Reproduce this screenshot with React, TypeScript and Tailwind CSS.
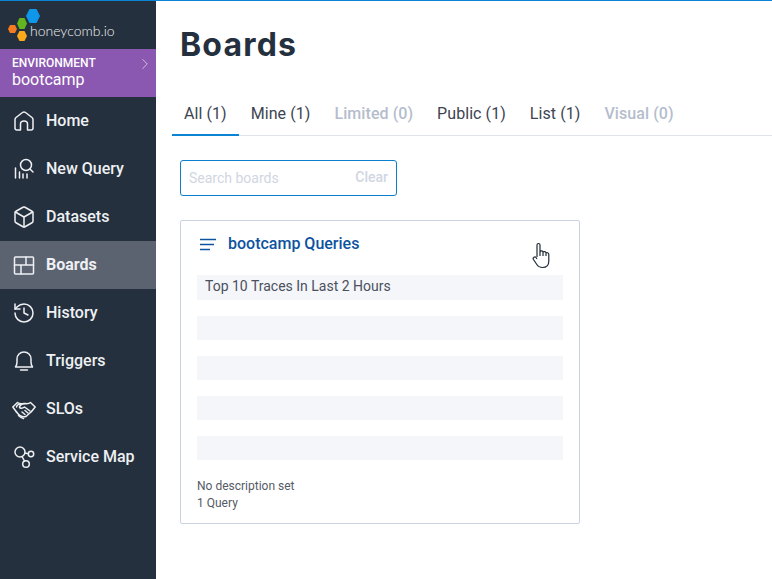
import { Box, History, ChevronRight } from "lucide-react";
import type { ReactNode } from "react";

const iconProps = { size: 24, strokeWidth: 1.5 };

function Icon({ children }: { children: ReactNode }) {
  return (
    <svg width="24" height="24" viewBox="0 0 24 24" fill="none" stroke="currentColor" strokeWidth="1.5" strokeLinecap="round" strokeLinejoin="round">
      {children}
    </svg>
  );
}

const HomeIcon = () => (
  <Icon>
    <path d="M3 19 V10.5 C3 9.5 3.5 9 4 8.5 L10.5 3.5 C11.5 2.8 12.5 2.8 13.5 3.5 L20 8.5 C20.5 9 21 9.5 21 10.5 V19 C21 20.2 20.2 21 19 21 H15.5 V15 C15.5 13 14 12 12 12 C10 12 8.5 13 8.5 15 V21 H5 C3.8 21 3 20.2 3 19 Z" />
  </Icon>
);

const QueryIcon = () => (
  <Icon>
    <circle cx="14" cy="8" r="5.5" />
    <path d="M18 12 L21 15" />
    <path d="M3.5 21 V11 M7.5 21 V15 M11 21 V17 M15 21 V17" />
  </Icon>
);

const BoardsIcon = () => (
  <Icon>
    <rect x="2.5" y="4" width="19" height="17" rx="1" />
    <path d="M2.5 12 H21.5 M14 4 V12 M9 12 V21" />
  </Icon>
);

const BellIcon = () => (
  <Icon>
    <path d="M3.5 18 C4 17 5 16 5 13 V10 C5 6 8 3 12 3 C16 3 19 6 19 10 V13 C19 16 20 17 20.5 18 Z" />
    <path d="M8.5 21 H15.5" />
  </Icon>
);

const HandshakeIcon = () => (
  <Icon>
    <path d="M4.5 15 L0.8 10 L5.5 5.5 C8 7.5 10 6.5 12 6.5 C14 6.5 16 7.5 18.5 5.5 L23.2 10 L19.5 14.5" />
    <path d="M14 6.5 C11 6.5 8 8 7.5 10 C8 12 10.5 11.5 12.5 10 L18 14" />
    <path d="M4.5 10 C5 8 7 7 9 7" />
    <path d="M4.5 15 C7.5 19 11 20.5 14 19.5 L19.5 14.5" />
    <path d="M6.5 18.5 C8 20 9.5 21 11.5 21.5" />
    <path d="M10 15 L13 17.5 M13 13.5 L16 16" />
  </Icon>
);

const MapIcon = () => (
  <Icon>
    <circle cx="8" cy="7" r="5" />
    <circle cx="19" cy="9" r="2.7" />
    <circle cx="14" cy="19" r="3.3" />
    <path d="M13 8 L16.3 8.7 M10 11.5 L12.5 16" />
  </Icon>
);

function Logo() {
  return (
    <svg width="32" height="32" viewBox="0 0 32 32" className="shrink-0">
      <polygon points="21.5,0 28.5,0 32,7 28.5,14 21.5,14 18,7" fill="#0d96ea" />
      <polygon points="11.5,9 16.5,9 19,14.5 16.5,20 11.5,20 9,14.5" fill="#63b51f" />
      <polygon points="2,16 7,16 9,20 7,24 2,24 0,20" fill="#f47b20" />
      <polygon points="11.5,22 16.5,22 19,27 16.5,32 11.5,32 9,27" fill="#fbaa1b" />
    </svg>
  );
}

function NavItem({ icon, label, active }: { icon: ReactNode; label: string; active?: boolean }) {
  return (
    <div className={`flex h-12 items-center text-[#eef0f3] ${active ? "bg-[#5c6370] font-bold" : "font-medium"}`}>
      <div className="flex w-[46px] shrink-0 justify-center pl-[2px]">{icon}</div>
      <span className="text-base">{label}</span>
    </div>
  );
}

function Tab({ label, active, disabled }: { label: string; active?: boolean; disabled?: boolean }) {
  return (
    <div
      className={`-mb-px flex h-[41px] items-center border-b-2 px-3 pb-[1px] text-base tracking-[0.07px] ${
        active ? "border-[#0b84d6]" : "border-transparent"
      } ${disabled ? "font-medium text-[#b5bdcd]" : "text-[#3d4451]"}`}
    >
      {label}
    </div>
  );
}

function Hand() {
  return (
    <svg width="18" height="27" viewBox="0 0 18 27" fill="#fff" stroke="#222b38" strokeWidth="1.2" className="absolute top-[241px] left-[532px]">
      <path d="M5 15 V3 C5 1 8 1 8 3 V10 C8.5 8.5 11 8.5 11 10.5 C11.5 9 14 9.3 14 11.3 C14.5 10.3 16.8 10.5 16.8 12.5 V19 C16.8 23 14.5 25.5 10.5 25.5 C7.5 25.5 6 24.5 4.5 22 L1.3 17.3 C0.5 15.5 3 14 4 15.5 L5 17" />
      <path d="M8 10 V14 M11 10.5 V14 M14 11.3 V14" fill="none" />
    </svg>
  );
}

export default function App() {
  const rows = ["Top 10 Traces In Last 2 Hours", "", "", "", ""];

  return (
    <div className="relative flex h-[579px] w-[772px] overflow-hidden border-t border-[#0b84d6] bg-white font-['Roboto',sans-serif]">
      {/* Sidebar */}
      <div className="w-[156px] shrink-0 bg-[#25303e]">
        <div className="flex h-12 items-start pt-2 pl-2">
          <Logo />
          <span className="mt-[13px] -ml-[10px] font-['Lato',sans-serif] text-[14px] leading-[18px] font-light text-[#eef0f3]">honeycomb.io</span>
        </div>
        <div className="flex h-12 items-center justify-between bg-[#8a58b1] pr-0.5 pl-3 text-white">
          <div>
            <div className="text-xs leading-[14px] font-medium">ENVIRONMENT</div>
            <div className="text-base leading-[20px]">bootcamp</div>
          </div>
          <ChevronRight size={18} strokeWidth={1} className="mb-[18px] text-[#e4daee]" />
        </div>
        <NavItem icon={<HomeIcon />} label="Home" />
        <NavItem icon={<QueryIcon />} label="New Query" />
        <NavItem icon={<Box {...iconProps} />} label="Datasets" />
        <NavItem icon={<BoardsIcon />} label="Boards" active />
        <NavItem icon={<History {...iconProps} />} label="History" />
        <NavItem icon={<BellIcon />} label="Triggers" />
        <NavItem icon={<HandshakeIcon />} label="SLOs" />
        <NavItem icon={<MapIcon />} label="Service Map" />
      </div>

      {/* Main */}
      <div className="min-w-0 flex-1">
        <h1 className="pt-[24px] pl-6 font-['Inter',sans-serif] text-[32px] leading-[40px] font-bold tracking-[1.2px] text-[#25303e]">Boards</h1>

        <div className="mt-[30px] ml-4 flex border-b border-[#dfe2ea]">
          <Tab label="All (1)" active />
          <Tab label="Mine (1)" />
          <Tab label="Limited (0)" disabled />
          <Tab label="Public (1)" />
          <Tab label="List (1)" />
          <Tab label="Visual (0)" disabled />
        </div>

        <div className="mt-6 ml-6 flex h-9 w-[217px] items-center justify-between rounded-[3px] border border-[#0b7fcb] px-2 text-sm font-medium">
          <span className="font-normal text-[#d0d6e2]">Search boards</span>
          <span className="pb-0.5 text-[#d0d6e2]">Clear</span>
        </div>

        <div className="mt-6 ml-6 h-[304px] w-[400px] rounded-[2px] border border-[#c9d2e0] px-4 pt-3">
          <div className="flex h-[42px] items-start">
            <svg width="18" height="14" viewBox="0 0 18 14" fill="none" stroke="#0d53a0" strokeWidth="1.4" className="mt-[5px] ml-[2px]">
              <path d="M1 1.5 H17 M1 6.5 H15 M1 11.5 H11" />
            </svg>
            <span className="ml-[11px] text-base leading-[22px] font-medium text-[#0d53a0]">bootcamp Queries</span>
          </div>
          <div className="flex flex-col gap-4">
            {rows.map((row, i) => (
              <div key={i} className={`flex items-center bg-[#f5f6fa] pl-2 text-sm text-[#4a505c] ${i === 0 ? "h-[25px] pb-[3px]" : "h-6"}`}>
                {row}
              </div>
            ))}
          </div>
          <div className="mt-[18px] text-xs leading-[17px] text-[#555b66]">
            <div>No description set</div>
            <div>1 Query</div>
          </div>
        </div>
      </div>

      <Hand />
    </div>
  );
}
